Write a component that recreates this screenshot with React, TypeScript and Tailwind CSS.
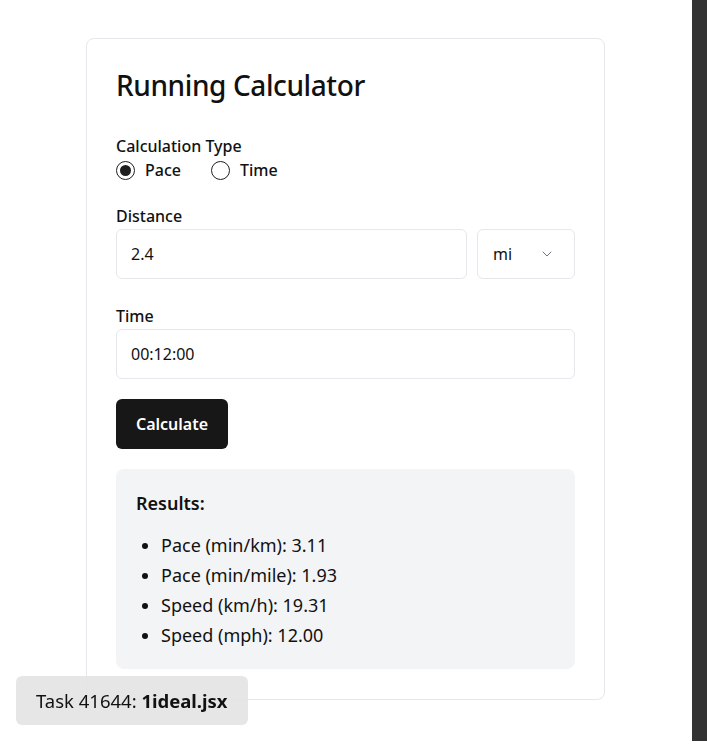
import React, { useState } from 'react';
import { ChevronDown } from 'lucide-react';

const font = { fontFamily: '"Noto Sans", "Open Sans", sans-serif' };

const Radio = ({ checked, label, onClick }: { checked: boolean; label: string; onClick: () => void }) => (
  <button type="button" onClick={onClick} className="flex items-center gap-[10px]">
    <span className="w-[19px] h-[19px] rounded-full border border-[#1f1f1f] flex items-center justify-center">
      {checked && <span className="w-[11px] h-[11px] rounded-full bg-[#1f1f1f]" />}
    </span>
    <span className="text-[16px] font-medium text-[#111]">{label}</span>
  </button>
);

export default function App() {
  const [mode, setMode] = useState<'pace' | 'time'>('pace');

  const results = [
    'Pace (min/km): 3.11',
    'Pace (min/mile): 1.93',
    'Speed (km/h): 19.31',
    'Speed (mph): 12.00',
  ];

  return (
    <div className="min-h-screen bg-white flex text-[#111]" style={font}>
      <div className="flex-1 relative">
        <div className="ml-[86px] mt-[38px] w-[519px] border border-[#e5e7eb] rounded-lg px-[29px] pt-[28px] pb-[30px]">
          <h1 className="text-[28px] leading-9 font-medium tracking-[-0.4px]">Running Calculator</h1>

          <div className="mt-[31px]">
            <div className="text-[16px] leading-6 font-medium">Calculation Type</div>
            <div className="flex items-center gap-[30px] leading-6">
              <Radio checked={mode === 'pace'} label="Pace" onClick={() => setMode('pace')} />
              <Radio checked={mode === 'time'} label="Time" onClick={() => setMode('time')} />
            </div>
          </div>

          <div className="mt-[22px]">
            <div className="text-[16px] leading-6 font-medium mb-[1px]">Distance</div>
            <div className="flex gap-[10px]">
              <div className="flex-1 h-[50px] border border-[#e5e7eb] rounded-md px-[14px] flex items-center text-[16px]">2.4</div>
              <div className="w-[98px] h-[50px] border border-[#e5e7eb] rounded-md pl-[15px] pr-[19px] flex items-center justify-between text-[16px]">
                <span>mi</span>
                <ChevronDown className="w-4 h-4 text-[#6b7280]" strokeWidth={1.5} />
              </div>
            </div>
          </div>

          <div className="mt-[25px]">
            <div className="text-[16px] leading-6 font-medium mb-[1px]">Time</div>
            <div className="h-[50px] border border-[#e5e7eb] rounded-md px-[14px] flex items-center text-[16px]">00:12:00</div>
          </div>

          <button className="mt-[20px] h-[50px] w-[112px] rounded-md bg-[#171717] text-white text-[16px] font-semibold">
            Calculate
          </button>

          <div className="mt-[20px] bg-[#f3f4f6] rounded-lg px-5 pt-5 pb-[19px]">
            <h2 className="text-[18px] leading-7 font-semibold">Results:</h2>
            <ul className="mt-[13px] list-disc pl-[25px] text-[18px] leading-[30px]">
              {results.map((r) => (
                <li key={r}>{r}</li>
              ))}
            </ul>
          </div>
        </div>

        <div className="fixed left-[16px] bottom-[20px] h-[49px] px-5 flex items-center rounded-md bg-[#e3e3e3]/90 text-[18.5px]">
          <span>Task 41644:&nbsp;</span>
          <span className="font-bold">1ideal.jsx</span>
        </div>
      </div>
      <div className="w-[15px] h-[741px] bg-[#333333]" />
    </div>
  );
}
